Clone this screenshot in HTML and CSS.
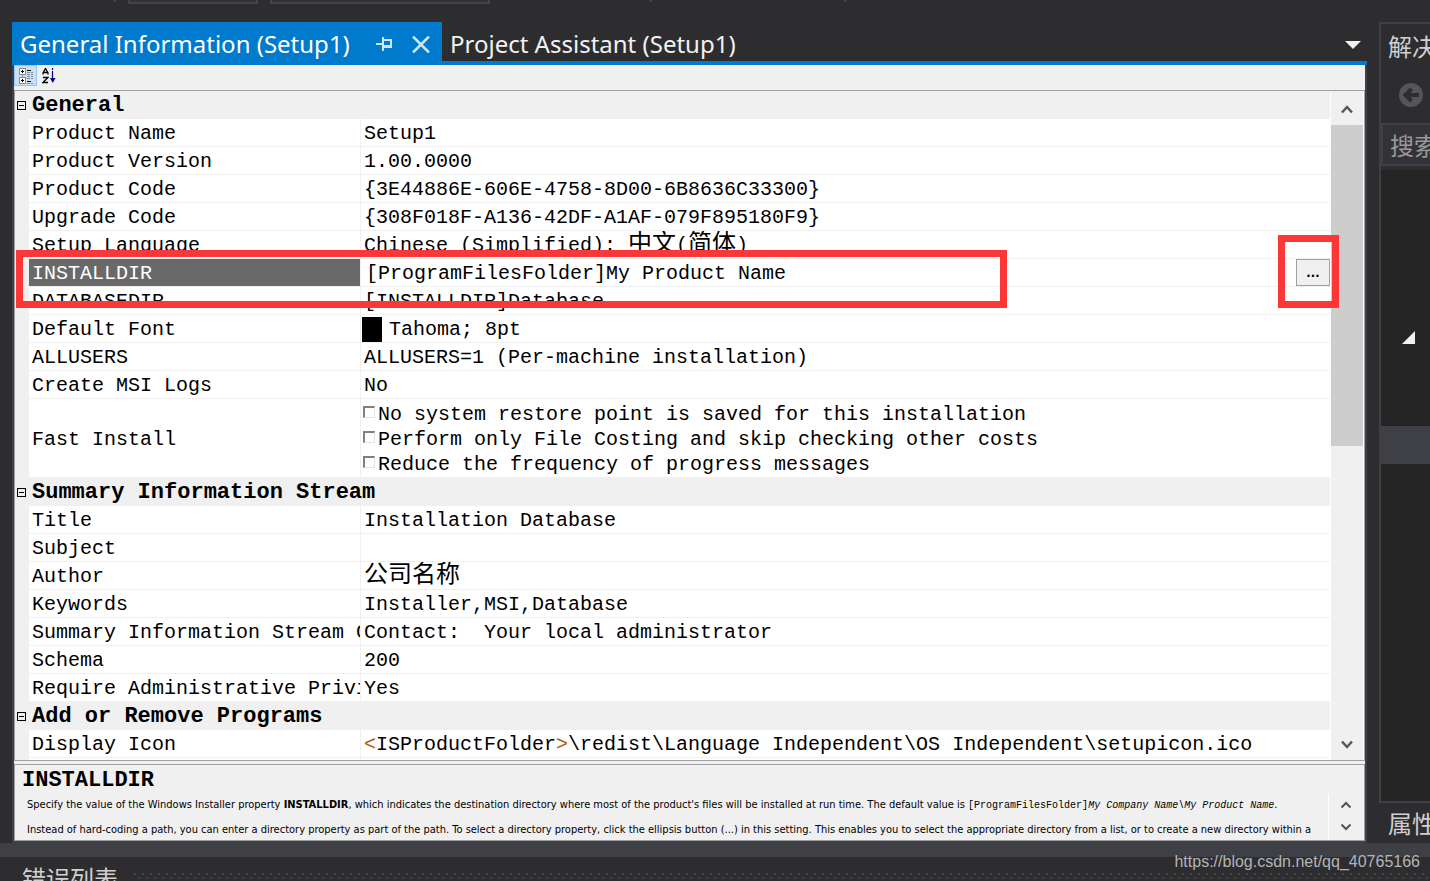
FILE: index.html
```html
<!DOCTYPE html>
<html lang="en">
<head>
<meta charset="utf-8">
<title>General Information (Setup1)</title>
<link rel="stylesheet" href="styles.css">
</head>
<body>
<header class="ide-toolbar">
  <span class="sep"></span><span class="combo combo-short"></span><span class="combo combo-long"></span><span class="sep sep-mid"></span><span class="sep sep-end"></span>
</header>
<main class="workspace">
  <section class="editor">
    <nav class="tabs">
      <div class="tab tab-active">
        <a href="#general" class="tab-link">General Information (Setup1)</a>
        <button class="tab-btn" type="button" aria-label="Pin">
          <svg width="17" height="16" viewBox="0 0 17 16"><path d="M0 8h6M7 1v14M7 4h9M7 11h9M15 3v9" fill="none" stroke="#d0e6f5" stroke-width="2"/><path d="M8 9h8v3H8z" fill="#d0e6f5"/></svg>
        </button>
        <button class="tab-btn tab-close" type="button" aria-label="Close">
          <svg width="20" height="17" viewBox="0 0 20 17"><path d="M2 0.5L18 16.500M18 0.500L2 16.500" fill="none" stroke="#d0e6f5" stroke-width="2.500"/></svg>
        </button>
      </div>
      <a href="#assistant" class="tab-link tab-other">Project Assistant (Setup1)</a>
      <button class="tab-menu" type="button" aria-label="Open documents">
        <svg width="16" height="8" viewBox="0 0 16 8"><path d="M0 0h16L8 8z" fill="#f1f1f1"/></svg>
      </button>
    </nav>
    <div class="document" id="general">
      <div class="grid-toolbar">
        <button class="tool tool-on" type="button" aria-label="Categorized">
          <svg width="16" height="17" viewBox="0 0 16 17" shape-rendering="crispEdges"><path d="M1.500 1.500h6v6h-6zM1.500 10.500h6v6h-6zM4.500 7.500v3" fill="#fff" stroke="#8c8c8c"/><path d="M3 4.500h3M4.500 3v3M3 13.500h3M4.500 12v3" stroke="#000"/><path d="M9 3.500h4M9 14.500h4" stroke="#000"/><path d="M9 5.500h3M13 5.500h2M9 7.500h3M13 7.500h2M9 9.500h3M13 9.500h2M9 11.500h3M13 11.500h2M9 16.500h3M13 16.500h2" stroke="#8c8c8c"/></svg>
        </button>
        <button class="tool" type="button" aria-label="Alphabetical">
          <svg width="14" height="16" viewBox="0 0 14 16"><path d="M1 6.500V5L3.500 0.500L6 5v1.500M1.500 4.500h4M1 9.500h5L1 14.500h5" fill="none" stroke="#000" stroke-width="1.300"/><path d="M10.500 0v2M10.500 3v9" stroke="#00007f" stroke-width="1.200"/><path d="M8 10h5.500l-2.700 5z" fill="#00007f"/></svg>
        </button>
      </div>
      <div class="grid">
        <div class="grid-view">
          <table class="props">
            <colgroup><col class="col-gutter"><col class="col-name"><col></colgroup>
            <tbody>
              <tr class="cat"><td><button class="fold" type="button" aria-label="Collapse General"></button></td><th colspan="2" scope="rowgroup">General</th></tr>
              <tr><td></td><th scope="row">Product Name</th><td>Setup1</td></tr>
              <tr><td></td><th scope="row">Product Version</th><td>1.00.0000</td></tr>
              <tr><td></td><th scope="row">Product Code</th><td>{3E44886E-606E-4758-8D00-6B8636C33300}</td></tr>
              <tr><td></td><th scope="row">Upgrade Code</th><td>{308F018F-A136-42DF-A1AF-079F895180F9}</td></tr>
              <tr><td></td><th scope="row">Setup Language</th><td>Chinese (Simplified): <span class="han">中文</span>(<span class="han">简体</span>)</td></tr>
              <tr class="selected"><td></td><th scope="row">INSTALLDIR</th><td><div class="edit"><span>[ProgramFilesFolder]My Product Name</span><button class="browse" type="button">...</button></div></td></tr>
              <tr><td></td><th scope="row">DATABASEDIR</th><td>[INSTALLDIR]Database</td></tr>
              <tr><td></td><th scope="row">Default Font</th><td><div class="font-value"><span class="swatch"></span>Tahoma; 8pt</div></td></tr>
              <tr><td></td><th scope="row">ALLUSERS</th><td>ALLUSERS=1 (Per-machine installation)</td></tr>
              <tr><td></td><th scope="row">Create MSI Logs</th><td>No</td></tr>
              <tr class="tall"><td></td><th scope="row">Fast Install</th><td>
                <label class="check"><input type="checkbox">No system restore point is saved for this installation</label>
                <label class="check"><input type="checkbox">Perform only File Costing and skip checking other costs</label>
                <label class="check"><input type="checkbox">Reduce the frequency of progress messages</label>
              </td></tr>
            </tbody>
            <tbody>
              <tr class="cat"><td><button class="fold" type="button" aria-label="Collapse Summary Information Stream"></button></td><th colspan="2" scope="rowgroup">Summary Information Stream</th></tr>
              <tr><td></td><th scope="row">Title</th><td>Installation Database</td></tr>
              <tr><td></td><th scope="row">Subject</th><td></td></tr>
              <tr><td></td><th scope="row">Author</th><td><span class="han">公司名称</span></td></tr>
              <tr><td></td><th scope="row">Keywords</th><td>Installer,MSI,Database</td></tr>
              <tr><td></td><th scope="row">Summary Information Stream Comments</th><td>Contact:&nbsp; Your local administrator</td></tr>
              <tr><td></td><th scope="row">Schema</th><td>200</td></tr>
              <tr><td></td><th scope="row">Require Administrative Privileges</th><td>Yes</td></tr>
            </tbody>
            <tbody>
              <tr class="cat"><td><button class="fold" type="button" aria-label="Collapse Add or Remove Programs"></button></td><th colspan="2" scope="rowgroup">Add or Remove Programs</th></tr>
              <tr><td></td><th scope="row">Display Icon</th><td><span class="bracket">&lt;</span>ISProductFolder<span class="bracket">&gt;</span>\redist\Language Independent\OS Independent\setupicon.ico</td></tr>
              <tr><td></td><th scope="row"></th><td></td></tr>
            </tbody>
          </table>
        </div>
        <div class="scrollbar">
          <button class="scroll-btn" type="button" aria-label="Scroll up"><svg width="12" height="9" viewBox="0 0 12 9"><path d="M1 7.500L6 2L11 7.500" fill="none" stroke="#555" stroke-width="2.500"/></svg></button>
          <span class="thumb"></span>
          <button class="scroll-btn" type="button" aria-label="Scroll down"><svg width="12" height="9" viewBox="0 0 12 9"><path d="M1 1.500L6 7L11 1.500" fill="none" stroke="#555" stroke-width="2.500"/></svg></button>
        </div>
        <span class="mark mark-row"></span>
        <span class="mark mark-button"></span>
      </div>
      <section class="help">
        <h2>INSTALLDIR</h2>
        <div class="help-body">
          <div class="help-text">
            <p>Specify the value of the Windows Installer property <b>INSTALLDIR</b>, which indicates the destination directory where most of the product's files will be installed at run time. The default value is <code>[ProgramFilesFolder]<i>My Company Name\My Product Name</i></code>.</p>
            <p>Instead of hard-coding a path, you can enter a directory property as part of the path. To select a directory property, click the ellipsis button (...) in this setting. This enables you to select the appropriate directory from a list, or to create a new directory within a</p>
          </div>
          <div class="help-scroll">
            <button class="scroll-btn" type="button" aria-label="Scroll help up"><svg width="10" height="8" viewBox="0 0 10 8"><path d="M0.500 6.500L5 2L9.500 6.500" fill="none" stroke="#555" stroke-width="2"/></svg></button>
            <button class="scroll-btn" type="button" aria-label="Scroll help down"><svg width="10" height="8" viewBox="0 0 10 8"><path d="M0.500 1.500L5 6L9.500 1.500" fill="none" stroke="#555" stroke-width="2"/></svg></button>
          </div>
        </div>
      </section>
    </div>
  </section>
  <aside class="side">
    <section class="solution">
      <h2 class="side-title">解决</h2>
      <div class="side-tools">
        <button class="back" type="button" aria-label="Back"><svg width="24" height="24" viewBox="0 0 24 24"><circle cx="12" cy="12" r="12" fill="#555558"/><path d="M20 12H7M12.500 6l-6 6l6 6" fill="none" stroke="#2d2d30" stroke-width="4"/></svg></button>
      </div>
      <input class="search" type="text" placeholder="搜索" aria-label="搜索">
      <div class="tree">
        <svg class="expander" width="13" height="13" viewBox="0 0 13 13"><path d="M13 0v13H0z" fill="#f1f1f1"/></svg>
        <div class="tree-selected"></div>
      </div>
    </section>
    <h2 class="side-title side-props">属性</h2>
  </aside>
</main>
<footer class="errors">
  <h2 class="errors-title">错误列表</h2>
  <span class="grip"></span>
</footer>
<span class="watermark">https://blog.csdn.net/qq_40765166</span>
</body>
</html>
```

FILE: styles.css
```css
* { box-sizing: border-box; }

body {
  margin: 0;
  height: 100vh;
  overflow: hidden;
  position: relative;
  display: flex;
  flex-direction: column;
  background: #2d2d30;
  color: #000;
  font-family: "Liberation Mono", "Noto Sans CJK SC", monospace;
  font-size: 20px;
}

button {
  padding: 0;
  border: 0;
  background: none;
  display: flex;
  align-items: center;
  justify-content: center;
}

svg { display: block; }
h2, p { margin: 0; }

.ide-toolbar {
  flex: none;
  height: 22px;
  display: flex;
  align-items: flex-start;
  padding-left: 114px;
}
.sep { width: 2px; height: 2px; background: #46464a; }
.sep-mid { margin-left: 160px; }
.sep-end { margin-left: 192px; }
.combo { height: 4px; border: 2px solid #434346; border-top: 0; background: #333337; }
.combo-short { width: 130px; margin: 0 12px; }
.combo-long { width: 220px; }

.workspace { flex: 1; min-height: 0; display: flex; gap: 12px; padding-left: 12px; }

.editor { flex: 1; min-width: 0; display: flex; flex-direction: column; }

.tabs {
  flex: none;
  display: flex;
  align-items: stretch;
  height: 43px;
  border-bottom: 4px solid #007acc;
  background: #2d2d30;
}
.tab { display: flex; align-items: flex-start; padding: 0 11px 0 8px; width: 430px; }
.tab-active { background: #007acc; }
.tab-link {
  color: #fff;
  text-decoration: none;
  white-space: nowrap;
  font: 24px/44px "Noto Sans", "Open Sans", sans-serif;
}
.tab-other { flex: 1; padding-left: 8px; color: #f1f1f1; }
.tab-btn { margin-left: auto; height: 44px; }
.tab-close { margin-left: 18px; }
.tab-menu { padding: 6px 6px 0 0; }

.document {
  flex: 1;
  min-height: 0;
  display: flex;
  flex-direction: column;
  padding: 0 2px 2px;
  background: #3f3f46;
}

.grid-toolbar { flex: none; display: flex; height: 25px; background: #f0f0f0; }
.tool { width: 23px; height: 21px; }
.tool-on { background: #c9e0f7; border: 1px solid #90c8f6; }

.grid {
  flex: 1;
  min-height: 0;
  position: relative;
  display: flex;
  border: 1px solid #a0a0a0;
  background: #fff;
}
.grid-view { flex: 1; min-width: 0; overflow: hidden; }

.props { width: 100%; table-layout: fixed; border-collapse: separate; border-spacing: 0; }
.col-gutter { width: 14px; }
.col-name { width: 332px; }
.props tr { height: 28px; }
.props td, .props th {
  padding: 2px 3px 0;
  height: 28px;
  line-height: 25px;
  text-align: left;
  font-weight: 400;
  white-space: nowrap;
  overflow: hidden;
  border-bottom: 1px solid #f0f0f0;
}
.props th { border-right: 1px solid #f0f0f0; padding-right: 0; }
.props td:first-child { background: #f0f0f0; padding: 2px 2px 0; }
.props .cat th { background: #f0f0f0; font-size: 22px; font-weight: 700; }
.props .selected th { background: #696969; background-clip: padding-box; color: #fff; }
.props .selected td:last-child { padding: 0 0 0 5px; }
.props .tall td, .props .tall th { height: 79px; }
.props .tall td:last-child { padding-left: 2px; }
.han { font: 24px/0 "Noto Sans CJK SC", sans-serif; }

.fold {
  width: 9px;
  height: 9px;
  border: 1px solid #000;
  background: linear-gradient(#000, #000) center / 5px 1px no-repeat;
}

.edit { display: flex; justify-content: space-between; height: 27px; line-height: 29px; }
.browse {
  width: 34px;
  height: 27px;
  border: 1px solid #a0a0a0;
  background: #f0f0f0;
  font: 700 13px/20px "DejaVu Sans Condensed", "DejaVu Sans", sans-serif;
}
.font-value { display: flex; align-items: center; gap: 7px; margin-left: -2px; height: 25px; }
.swatch { width: 20px; height: 25px; background: #000; }
.check { display: flex; align-items: center; gap: 3px; height: 25px; line-height: 25px; }
.check input {
  appearance: none;
  margin: 0 0 5px;
  width: 12px;
  height: 12px;
  border: 1px solid #e3e3e3;
  border-top: 2px solid #808080;
  border-left: 2px solid #808080;
  background: #fff;
}
.bracket { color: #b05a10; }

.scrollbar {
  flex: none;
  width: 34px;
  display: flex;
  flex-direction: column;
  background: #f0f0f0;
  border-left: 1px solid #fff;
  border-right: 1px solid #fff;
}
.scroll-btn { height: 34px; }
.scrollbar .scroll-btn { width: 32px; flex: none; padding-top: 3px; }
.scrollbar .scroll-btn:last-child { margin-top: auto; }
.thumb { height: 321px; background: #cdcdcd; }

.mark { position: absolute; border: 7px solid #fc3737; pointer-events: none; }
.mark-row { left: 1px; top: 159px; width: 991px; height: 58px; }
.mark-button { right: 25px; top: 144px; width: 61px; height: 73px; }

.help {
  flex: none;
  height: 77px;
  margin-top: 3px;
  display: flex;
  flex-direction: column;
  border: 1px solid #a0a0a0;
  background: #f0f0f0;
  outline: 3px solid #f0f0f0;
  clip-path: inset(-3px 0 0 0);
}
.help h2 { padding-left: 7px; font-size: 22px; line-height: 31px; height: 29px; }
.help-body { flex: 1; min-height: 0; display: flex; }
.help-text {
  flex: 1;
  min-width: 0;
  overflow: hidden;
  padding-left: 12px;
  white-space: nowrap;
  font: 11px/25px "DejaVu Sans Condensed", "DejaVu Sans", sans-serif;
}
.help-text p { height: 25px; line-height: 22px; }
.help-text code { font: 10px/20px "Liberation Mono", monospace; }
.help-scroll {
  width: 36px;
  display: flex;
  flex-direction: column;
  border-left: 1px solid #fff;
}
.help-scroll .scroll-btn { height: 22px; width: 33px; }

.side { flex: none; width: 51px; overflow: hidden; }
.solution {
  height: 781px;
  display: flex;
  flex-direction: column;
  border: 2px solid #3f3f46;
  border-right: 0;
}
.side-title {
  padding-left: 7px;
  width: 80px;
  white-space: nowrap;
  color: #d0d0d0;
  font: 24px/44px "Noto Sans CJK SC", sans-serif;
}
.side-tools { height: 55px; padding: 15px 0 0 18px; }
.search {
  flex: none;
  width: 80px;
  height: 43px;
  padding: 0 7px;
  border: 2px solid #3f3f46;
  background: #333337;
  color: #999;
  font: 24px/38px "Noto Sans CJK SC", sans-serif;
}
.search::placeholder { color: #999; }
.tree { flex: 1; margin-top: 4px; padding-top: 161px; background: #252526; }
.expander { margin-left: 21px; }
.tree-selected { margin-top: 82px; height: 38px; background: #3f3f46; }
.side-props { padding-left: 9px; line-height: 40px; }

.errors {
  flex: none;
  display: flex;
  height: 38px;
  padding: 0 0 0 22px;
  border-top: 14px solid #3f3f46;
  overflow: hidden;
}
.errors-title { color: #d0d0d0; font: 24px/42px "Noto Sans CJK SC", sans-serif; }
.grip {
  flex: 1;
  margin: 16px 0 0 16px;
  height: 8px;
  background:
    conic-gradient(from 270deg at 2px 2px, #46464a 25%, transparent 0) 0 0 / 8px 8px,
    conic-gradient(from 270deg at 2px 2px, #46464a 25%, transparent 0) 4px 4px / 8px 8px;
}

.watermark {
  position: absolute;
  right: 10px;
  bottom: 8px;
  color: #b4b4b6;
  font: 16px/22px "Liberation Sans", Arial, sans-serif;
}
```
